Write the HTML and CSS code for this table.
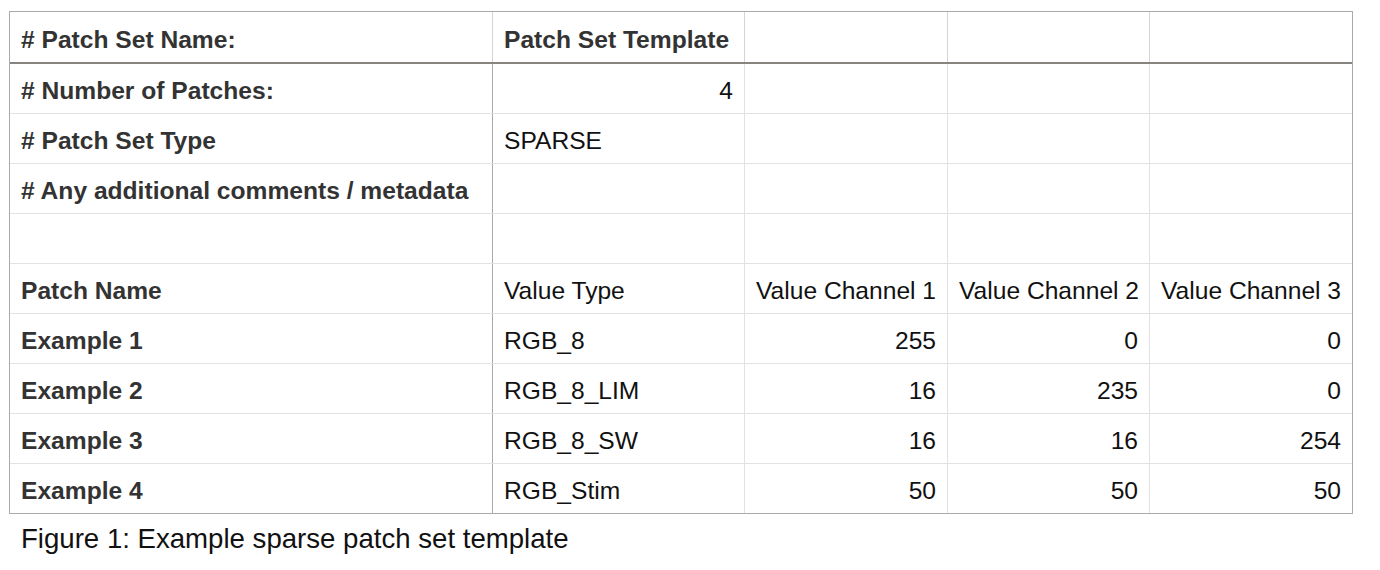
FILE: index.html
```html
<!DOCTYPE html>
<html>
<head>
<meta charset="utf-8">
<link rel="stylesheet" href="styles.css">
</head>
<body>
<div class="sheet">
  <div class="row head">
    <div class="cell key">Patch Set Name:</div>
    <div class="cell bold">Patch Set Template</div>
    <div class="cell"></div>
    <div class="cell"></div>
    <div class="cell"></div>
  </div>
  <div class="row">
    <div class="cell key"># Number of Patches:</div>
    <div class="cell num">4</div>
    <div class="cell"></div>
    <div class="cell"></div>
    <div class="cell"></div>
  </div>
  <div class="row">
    <div class="cell key"># Patch Set Type</div>
    <div class="cell">SPARSE</div>
    <div class="cell"></div>
    <div class="cell"></div>
    <div class="cell"></div>
  </div>
  <div class="row">
    <div class="cell key"># Any additional comments / metadata</div>
    <div class="cell"></div>
    <div class="cell"></div>
    <div class="cell"></div>
    <div class="cell"></div>
  </div>
  <div class="row">
    <div class="cell key"></div>
    <div class="cell"></div>
    <div class="cell"></div>
    <div class="cell"></div>
    <div class="cell"></div>
  </div>
  <div class="row">
    <div class="cell key">Patch Name</div>
    <div class="cell">Value Type</div>
    <div class="cell">Value Channel 1</div>
    <div class="cell">Value Channel 2</div>
    <div class="cell">Value Channel 3</div>
  </div>
  <div class="row">
    <div class="cell key">Example 1</div>
    <div class="cell">RGB_8</div>
    <div class="cell num">255</div>
    <div class="cell num">0</div>
    <div class="cell num">0</div>
  </div>
  <div class="row">
    <div class="cell key">Example 2</div>
    <div class="cell">RGB_8_LIM</div>
    <div class="cell num">16</div>
    <div class="cell num">235</div>
    <div class="cell num">0</div>
  </div>
  <div class="row">
    <div class="cell key">Example 3</div>
    <div class="cell">RGB_8_SW</div>
    <div class="cell num">16</div>
    <div class="cell num">16</div>
    <div class="cell num">254</div>
  </div>
  <div class="row last">
    <div class="cell key">Example 4</div>
    <div class="cell">RGB_Stim</div>
    <div class="cell num">50</div>
    <div class="cell num">50</div>
    <div class="cell num">50</div>
  </div>
</div>
<p class="caption">Figure 1: Example sparse patch set template</p>
</body>
</html>
```
FILE: styles.css
```css
html, body {
  margin: 0;
  background: #ffffff;
}
body {
  padding: 11px 0 0 9px;
  font-family: "Liberation Sans", Arial, sans-serif;
  color: #111111;
}
.sheet {
  width: 1342px;
  border: 1px solid #aaaaaa;
}
.row {
  box-sizing: border-box;
  display: grid;
  grid-template-columns: 483px 252px 203px 202px 202px;
  height: 50px;
  border-bottom: 1px solid #e2e2e2;
}
.row.head {
  height: 52px;
  border-bottom: 2px solid #87837e;
}
.row.last {
  height: 49px;
  border-bottom: none;
}
.cell {
  box-sizing: border-box;
  border-right: 1px solid #e2e2e2;
  padding: 15px 11px 0 11px;
  font-size: 24.6px;
  line-height: 24px;
  white-space: nowrap;
  overflow: hidden;
}
.row.head .cell {
  padding-top: 16px;
  border-right-color: #d4d4d4;
}
.cell:last-child {
  border-right: none;
}
.cell.key {
  font-weight: bold;
  color: #333333;
  border-right-color: #a8a8a8;
}
.row.head .cell.key {
  border-right-color: #d4d4d4;
}
.row.head .cell.key::before {
  content: "# ";
}
.cell.bold {
  font-weight: bold;
  color: #333333;
}
.cell.num {
  text-align: right;
}
.caption {
  margin: 9px 0 0 12px;
  font-size: 27.6px;
  line-height: 32px;
  color: #111111;
}
```
